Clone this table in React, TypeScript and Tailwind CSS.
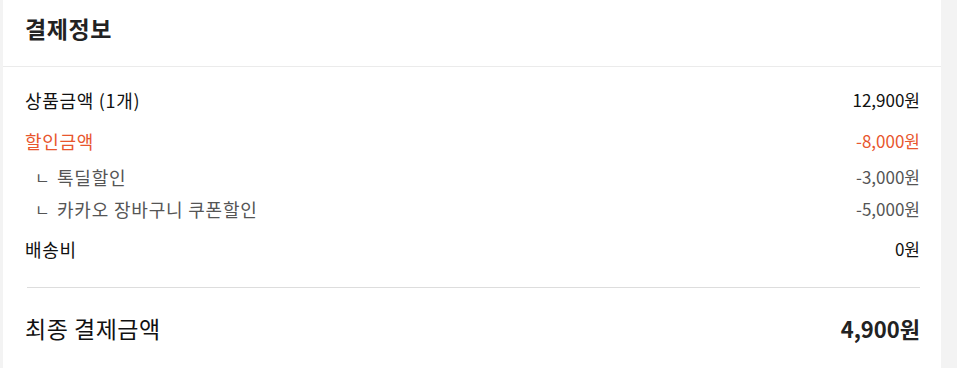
const font = { fontFamily: '"Noto Sans CJK KR", "Noto Sans", sans-serif' };

function Row({
  label,
  value,
  className,
}: {
  label: string;
  value: string;
  className: string;
}) {
  return (
    <div className={`flex justify-between items-center leading-[24px] text-[18px] ${className}`}>
      <span className="tracking-[0.7px]">{label}</span>
      <span className="text-[17px]">{value}</span>
    </div>
  );
}

function SubRow({ label, value, className }: { label: string; value: string; className: string }) {
  return (
    <div className={`flex justify-between items-center leading-[24px] text-[18px] text-[#555555] ${className}`}>
      <span className="flex items-center">
        <span className="w-[22px] pl-[10px] text-[16px]">ㄴ</span>
        <span className="ml-[10px] tracking-[0.8px]">{label}</span>
      </span>
      <span className="text-[17px]">{value}</span>
    </div>
  );
}

export default function App() {
  return (
    <div className="flex h-[368px] w-[957px] bg-[#f3f3f3] pl-[3px] pr-[16px]" style={font}>
      <div className="flex-1 bg-white">
        <div className="h-[67px] border-b border-[#ebebeb] pl-[22px] pt-[13px]">
          <h2 className="text-[23px] leading-[30px] font-bold tracking-[0.6px] text-[#222222]">결제정보</h2>
        </div>
        <div className="pl-[22px] pr-[21px] pt-[21px]">
          <Row label="상품금액 (1개)" value="12,900원" className="text-[#111111]" />
          <Row label="할인금액" value="-8,000원" className="mt-[17px] text-[#e8562e]" />
          <SubRow label="톡딜할인" value="-3,000원" className="mt-[12px]" />
          <SubRow label="카카오 장바구니 쿠폰할인" value="-5,000원" className="mt-[8px]" />
          <Row label="배송비" value="0원" className="mt-[16px] text-[#111111]" />
          <div className="mt-[26px] ml-[2px] h-px bg-[#dddddd]" />
          <div className="mt-[25px] flex justify-between items-center leading-[30px] text-[#111111]">
            <span className="text-[23px] tracking-[0.5px]">최종 결제금액</span>
            <span className="text-[22px] font-bold text-[#222222]">4,900원</span>
          </div>
        </div>
      </div>
    </div>
  );
}
